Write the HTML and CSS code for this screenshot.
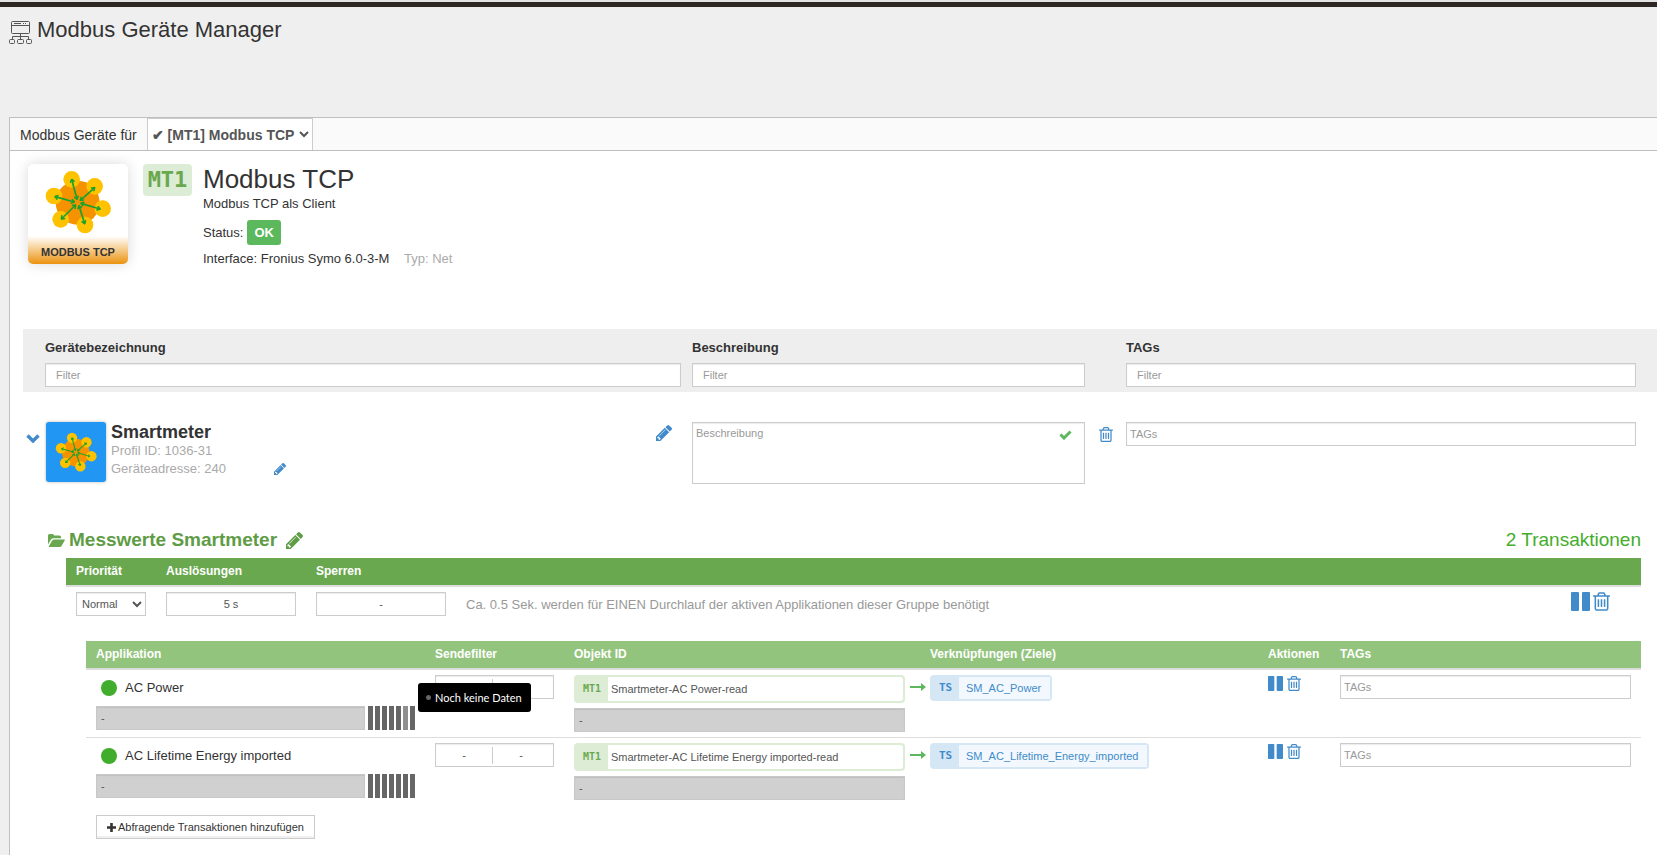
FILE: index.html
```html
<!DOCTYPE html>
<html lang="de">
<head>
<meta charset="utf-8">
<title>Modbus Geräte Manager</title>
<link rel="stylesheet" href="styles.css">
</head>
<body>
<svg class="sprite" aria-hidden="true">
  <defs>
    <marker id="tip" viewBox="0 0 12 14" refX="10" refY="7" markerWidth="14" markerHeight="16" markerUnits="userSpaceOnUse" orient="auto-start-reverse">
      <path d="M2 1 L10 7 L2 13" fill="none" stroke="#17a22f" stroke-width="4"/>
    </marker>
  </defs>
  <symbol id="flower" viewBox="132 90 204 192">
    <circle cx="233" cy="188" r="66" fill="#f59200"/>
    <g fill="#fec200">
      <circle cx="215" cy="118" r="25"/><circle cx="284" cy="139" r="25"/><circle cx="162" cy="168" r="25"/>
      <circle cx="308" cy="206" r="25"/><circle cx="182" cy="238" r="25"/><circle cx="255" cy="255" r="25"/>
    </g>
    <g stroke="#17a22f" stroke-width="5">
      <line x1="231" y1="178" x2="215" y2="118" marker-start="url(#tip)" marker-end="url(#tip)"/>
      <line x1="241" y1="181" x2="284" y2="143" marker-start="url(#tip)" marker-end="url(#tip)"/>
      <line x1="223" y1="186" x2="165" y2="170" marker-start="url(#tip)" marker-end="url(#tip)"/>
      <line x1="243" y1="190" x2="300" y2="207" marker-start="url(#tip)" marker-end="url(#tip)"/>
      <line x1="227" y1="195" x2="184" y2="237" marker-start="url(#tip)" marker-end="url(#tip)"/>
      <line x1="237" y1="197" x2="254" y2="251" marker-start="url(#tip)" marker-end="url(#tip)"/>
    </g>
  </symbol>
  <symbol id="trash" viewBox="192 128 1408 1536"><path fill="currentColor" d="M704 736v576q0 14-9 23t-23 9h-64q-14 0-23-9t-9-23V736q0-14 9-23t23-9h64q14 0 23 9t9 23zm256 0v576q0 14-9 23t-23 9h-64q-14 0-23-9t-9-23V736q0-14 9-23t23-9h64q14 0 23 9t9 23zm256 0v576q0 14-9 23t-23 9h-64q-14 0-23-9t-9-23V736q0-14 9-23t23-9h64q14 0 23 9t9 23zm128 724V512H448v948q0 22 7 40.5t14.5 27 10.5 8.5h832q3 0 10.5-8.5t14.5-27 7-40.5zM672 384h448l-48-117q-7-9-17-11H738q-10 2-17 11zm928 32v64q0 14-9 23t-23 9h-96v948q0 83-47 143.5t-113 60.5H480q-66 0-113-58.5T320 1464V512h-96q-14 0-23-9t-9-23v-64q0-14 9-23t23-9h309l70-167q15-37 54-63t79-26h320q40 0 79 26t54 63l70 167h309q14 0 23 9t9 23z"/></symbol>
  <symbol id="pencil" viewBox="128 149 1515 1515"><path fill="currentColor" d="M491 1536l91-91-235-235-91 91v107h128v128h107zm523-928q0-22-22-22-10 0-17 7l-542 542q-7 7-7 17 0 22 22 22 10 0 17-7l542-542q7-7 7-17zm-54-192l416 416-832 832H128v-416zm683 96q0 53-37 90l-166 166-416-416 166-165q36-38 90-38 53 0 91 38l235 234q37 39 37 91z"/></symbol>
  <symbol id="pause" viewBox="0 0 19 19"><path fill="currentColor" d="M1 0h6a1 1 0 0 1 1 1v17a1 1 0 0 1-1 1h-6a1 1 0 0 1-1-1v-17a1 1 0 0 1 1-1zM12 0h6a1 1 0 0 1 1 1v17a1 1 0 0 1-1 1h-6a1 1 0 0 1-1-1v-17a1 1 0 0 1 1-1z"/></symbol>
  <symbol id="arrow" viewBox="0 0 16 8"><path fill="currentColor" d="M0 3h11v-3l5 4-5 4v-3h-11z"/></symbol>
</svg>

<div class="topbar"></div>
<header class="page-head">
  <svg class="net-icon" viewBox="0 0 23 23" fill="none" stroke="#555" aria-hidden="true">
    <rect x="2.5" y=".5" width="18" height="12" rx="1"/><path d="M3 4.500h17M5 2.500h7M14 2.500h1M16 2.500h1M11.500 13v5M3.500 18v-2.500h16v2.500"/>
    <rect x=".5" y="18.500" width="5" height="4" rx="1"/><rect x="8.500" y="18.500" width="6" height="4" rx="1"/><rect x="17.500" y="18.500" width="5" height="4" rx="1"/>
  </svg>
  <h1>Modbus Geräte Manager</h1>
</header>

<main class="panel">
  <div class="panel-head">
    <label for="module">Modbus Geräte für</label>
    <select id="module" class="module-select"><option>✔ [MT1] Modbus TCP</option></select>
  </div>

  <section class="module">
    <div class="card">
      <svg class="card-logo" aria-hidden="true"><use href="#flower"/></svg>
      <span class="card-name">MODBUS TCP</span>
    </div>
    <span class="module-id">MT1</span>
    <div>
      <h2>Modbus TCP</h2>
      <p class="subtitle">Modbus TCP als Client</p>
      <p class="status">Status: <span class="ok">OK</span></p>
      <p class="interface">Interface: Fronius Symo 6.0-3-M <span class="muted">Typ: Net</span></p>
    </div>
  </section>

  <section class="columns filters">
    <div class="c-name"><label for="f1">Gerätebezeichnung</label><input id="f1" class="field" placeholder="Filter"></div>
    <div class="c-desc"><label for="f2">Beschreibung</label><input id="f2" class="field" placeholder="Filter"></div>
    <div class="c-tags"><label for="f3">TAGs</label><input id="f3" class="field" placeholder="Filter"></div>
  </section>

  <section class="columns device">
    <button class="icon-btn toggle" aria-label="Einklappen"><svg width="14" height="9" viewBox="0 0 14 9"><path d="M1.500 1.500 7 7l5.500-5.500" fill="none" stroke="currentColor" stroke-width="3.400"/></svg></button>
    <div class="c-name device-main">
      <div class="tile"><svg class="tile-logo" aria-hidden="true"><use href="#flower"/></svg></div>
      <div class="device-text">
        <h3>Smartmeter</h3>
        <p>Profil ID: 1036-31</p>
        <p class="address">Geräteadresse: 240 <button class="icon-btn" aria-label="Adresse bearbeiten"><svg width="12" height="12"><use href="#pencil"/></svg></button></p>
      </div>
      <button class="icon-btn edit-device" aria-label="Gerät bearbeiten"><svg width="16" height="16"><use href="#pencil"/></svg></button>
    </div>
    <div class="c-desc desc-box">
      <textarea class="field tight" aria-label="Beschreibung" placeholder="Beschreibung"></textarea>
      <svg class="saved" viewBox="0 0 13 10" aria-hidden="true"><path d="M1.500 4.500 5 8l6.500-6.500" fill="none" stroke="#5cb85c" stroke-width="3"/></svg>
    </div>
    <div class="c-del"><button class="icon-btn" aria-label="Gerät löschen"><svg width="14" height="15"><use href="#trash"/></svg></button></div>
    <div class="c-tags"><input class="field tight" aria-label="TAGs" placeholder="TAGs"></div>
  </section>

  <section class="group">
    <div class="group-head">
      <svg width="17" height="13" viewBox="0 0 17 13" aria-hidden="true"><path fill="currentColor" d="M0 10.500V1.500Q0 0 1.500 0h3Q6 0 6 1.500h5.500Q13 1.500 13 3v1.200H5.500Q4 4.200 3 5.500zM1 12 4.200 6.400Q4.800 5.400 6 5.400h10.300q1 0 .4 1L13.800 11.500Q13.200 13 11.800 13H1.500Q.5 13 1 12z"/></svg>
      <h3>Messwerte Smartmeter</h3>
      <button class="icon-btn green" aria-label="Gruppe bearbeiten"><svg width="17" height="17"><use href="#pencil"/></svg></button>
      <span class="count">2 Transaktionen</span>
    </div>

    <div class="group-body">
      <table class="grid settings">
        <colgroup><col class="w-prio"><col class="w-trig"><col class="w-trig"><col><col class="w-ops"></colgroup>
        <thead><tr><th>Priorität</th><th>Auslösungen</th><th>Sperren</th><th></th><th></th></tr></thead>
        <tbody><tr>
          <td><select class="field prio" aria-label="Priorität"><option>Normal</option></select></td>
          <td><button class="field value">5 s</button></td>
          <td><button class="field value">-</button></td>
          <td class="note">Ca. 0.5 Sek. werden für EINEN Durchlauf der aktiven Applikationen dieser Gruppe benötigt</td>
          <td><div class="ops large"><button class="icon-btn" aria-label="Pausieren"><svg width="19" height="19"><use href="#pause"/></svg></button><button class="icon-btn" aria-label="Löschen"><svg width="17" height="19"><use href="#trash"/></svg></button></div></td>
        </tr></tbody>
      </table>

      <div class="apps-wrap">
        <table class="grid apps">
          <colgroup><col class="w-app"><col class="w-filter"><col class="w-object"><col class="w-link"><col class="w-act"><col></colgroup>
          <thead><tr><th>Applikation</th><th>Sendefilter</th><th>Objekt ID</th><th class="th-link">Verknüpfungen (Ziele)</th><th>Aktionen</th><th>TAGs</th></tr></thead>
          <tbody>
            <tr>
              <td>
                <div class="app-name"><i class="dot"></i>AC Power</div>
                <div class="app-value"><div class="readout">-</div><div class="bars"><i></i><i></i><i></i><i></i><i></i><i class="hover"></i><i></i></div><div class="tooltip" role="tooltip"><i></i>Noch keine Daten</div></div>
              </td>
              <td><button class="field split" aria-label="Sendefilter"><span></span><span></span></button></td>
              <td class="td-object"><div class="object"><b>MT1</b><span>Smartmeter-AC Power-read</span></div><div class="readout">-</div></td>
              <td class="td-link"><div class="link-row"><svg class="arrow" aria-hidden="true"><use href="#arrow"/></svg><a class="target" href="#"><b>TS</b><span>SM_AC_Power</span></a></div></td>
              <td><div class="ops"><button class="icon-btn" aria-label="Pausieren"><svg width="15" height="15"><use href="#pause"/></svg></button><button class="icon-btn" aria-label="Löschen"><svg width="14" height="15"><use href="#trash"/></svg></button></div></td>
              <td><input class="field tight" aria-label="TAGs" placeholder="TAGs"></td>
            </tr>
            <tr>
              <td>
                <div class="app-name"><i class="dot"></i>AC Lifetime Energy imported</div>
                <div class="app-value"><div class="readout">-</div><div class="bars"><i></i><i></i><i></i><i></i><i></i><i></i><i></i></div></div>
              </td>
              <td><button class="field split" aria-label="Sendefilter"><span>-</span><span>-</span></button></td>
              <td class="td-object"><div class="object"><b>MT1</b><span>Smartmeter-AC Lifetime Energy imported-read</span></div><div class="readout">-</div></td>
              <td class="td-link"><div class="link-row"><svg class="arrow" aria-hidden="true"><use href="#arrow"/></svg><a class="target" href="#"><b>TS</b><span>SM_AC_Lifetime_Energy_imported</span></a></div></td>
              <td><div class="ops"><button class="icon-btn" aria-label="Pausieren"><svg width="15" height="15"><use href="#pause"/></svg></button><button class="icon-btn" aria-label="Löschen"><svg width="14" height="15"><use href="#trash"/></svg></button></div></td>
              <td><input class="field tight" aria-label="TAGs" placeholder="TAGs"></td>
            </tr>
          </tbody>
        </table>
        <button class="field add"><svg width="9" height="9" viewBox="0 0 9 9" aria-hidden="true"><path d="M4.500 0v9M0 4.500h9" stroke="#333" stroke-width="2.600"/></svg>Abfragende Transaktionen hinzufügen</button>
      </div>
    </div>
  </section>
</main>
</body>
</html>
```

FILE: styles.css
```css
* { box-sizing: border-box; }
body {
  margin: 0;
  min-height: 100vh;
  display: flex;
  flex-direction: column;
  background: #efefef;
  color: #333;
  font: 13px/18px "Liberation Sans", Arial, sans-serif;
}
h1, h2, h3, p { margin: 0; font-weight: normal; }
button, input, select, textarea { font-family: inherit; margin: 0; }
svg { display: block; flex: none; }
.sprite { position: absolute; width: 0; height: 0; }

.topbar { height: 7px; background: #2e2723; border-top: 2px solid #e4e4e4; }
.page-head { display: flex; align-items: center; gap: 5px; padding: 7px 9px 0; margin-bottom: 71px; }
.page-head h1 { font-size: 22px; line-height: 32px; }
.net-icon { width: 23px; height: 23px; margin-top: 4px; }

.panel { flex: 1; margin-left: 9px; padding-bottom: 16px; background: #fff; border-left: 1px solid #bfbfbf; border-top: 1px solid #bfbfbf; }
.panel-head { display: flex; align-items: center; gap: 10px; padding-left: 10px; height: 33px; background: #fafafa; border-bottom: 1px solid #bfbfbf; font-size: 14px; line-height: 20px; }
.panel-head label { padding-top: 2px; }
.module-select { width: 166px; height: 32px; padding: 1px 0 0; border: 1px solid #ccc; border-bottom: 0; border-radius: 0; background: #fff; color: #555; font-size: 14px; font-weight: bold; }

.module { display: flex; align-items: flex-start; padding: 13px 18px 0; }
.card { display: flex; flex-direction: column; align-items: center; justify-content: space-between; width: 100px; height: 100px; margin-right: 15px; padding-top: 6px; border-radius: 5px; overflow: hidden; background: #fff; box-shadow: 0 0 14px rgba(0, 0, 0, .15); }
.card-logo { width: 68px; height: 64px; }
.card-name { width: 100%; height: 28px; background: linear-gradient(#fff, #eb930f); color: #333; font: bold 11px/32px "Liberation Sans", Arial, sans-serif; text-align: center; }
.module-id { height: 32px; width: 49px; margin-right: 11px; border-radius: 4px; background: #dcecd5; color: #6aa84f; font: bold 22px/32px "DejaVu Sans Mono", monospace; text-align: center; }
.module h2 { font-size: 26px; line-height: 30px; }
.subtitle { line-height: 20px; }
.status { display: flex; align-items: center; gap: 4px; margin-top: 6px; }
.ok { padding: 0 7px; border-radius: 3px; background: #5cb85c; color: #fff; font-weight: bold; line-height: 25px; }
.interface { margin-top: 4px; line-height: 20px; }
.muted { margin-left: 11px; color: #aaa; }

.columns { display: grid; grid-template-columns: 22px 636fr 11px 393fr 41px 510fr; margin-left: 13px; padding-right: 21px; }
.c-name { grid-column: 2; }
.c-desc { grid-column: 4; }
.c-del { grid-column: 5; }
.c-tags { grid-column: 6; }
.filters { margin-top: 60px; padding-top: 9px; padding-bottom: 5px; background: #eee; }
.filters label { display: block; margin-bottom: 5px; font-weight: bold; line-height: 20px; }

.field { display: block; width: 100%; height: 24px; padding: 0 10px; border: 1px solid #ccc; border-radius: 0; background: #fff; box-shadow: inset 0 1px 1px rgba(0, 0, 0, .08); color: #555; font-size: 11px; outline: 0; }
.field::placeholder { color: #999; opacity: 1; }
.tight { padding: 0 3px; }
.icon-btn { display: block; padding: 0; border: 0; background: none; color: #428bca; }
.green { color: #5f9c46; }

.device { margin-top: 30px; }
.toggle { justify-self: start; align-self: start; padding: 12px 0 0 3px; }
.device-main { display: flex; align-items: flex-start; }
.tile { width: 60px; height: 60px; margin: 0 5px 0 1px; padding: 10px 8px; border-radius: 3px; background: #2196f3; box-shadow: 0 0 3px rgba(0, 0, 0, .3); }
.tile-logo { width: 44px; height: 40px; }
.device-text { color: #aaa; }
.device-text h3 { color: #333; font-size: 18px; line-height: 20px; font-weight: bold; }
.address { display: flex; align-items: center; gap: 48px; }
.edit-device { margin-left: auto; padding: 3px 9px 0 0; }
.desc-box { position: relative; }
.desc-box textarea { height: 62px; padding-top: 4px; resize: none; }
.saved { position: absolute; top: 8px; right: 13px; width: 13px; height: 10px; }
.c-del { padding: 5px 0 0 14px; }

.group { margin: 44px 16px 0 38px; }
.group-head { display: flex; align-items: center; gap: 4px; height: 24px; margin-bottom: 6px; color: #6aa84f; font-size: 19px; line-height: 24px; }
.group-head h3 { margin-right: 5px; color: #5f9c46; font-size: 19px; font-weight: bold; }
.count { margin-left: auto; color: #45ad2c; }
.group-body { margin-left: 18px; }

.grid { width: 100%; table-layout: fixed; border-collapse: separate; border-spacing: 0; }
.grid th { height: 29px; padding: 0 10px 2px; border-bottom: 2px solid #ddd; background: #6aa84f; color: #fff; font-size: 12px; line-height: 14px; text-align: left; }
.grid td { padding: 5px 10px; vertical-align: top; }
.apps th { background: #93c47d; }
.apps tbody tr + tr td { border-top: 1px solid #ddd; }
.w-prio { width: 90px; }
.w-trig { width: 150px; }
.w-ops { width: 80px; }
.w-app { width: 339px; }
.w-filter { width: 139px; }
.w-object { width: 341px; }
.w-link { width: 353px; }
.w-act { width: 72px; }

.prio { padding: 0 1px; }
.value { text-align: center; }
.grid .note { padding-top: 6px; padding-bottom: 4px; color: #999; line-height: 24px; }
.ops { display: flex; gap: 4px; padding-top: 1px; }
.ops.large { gap: 3px; padding-top: 0; }

.apps-wrap { margin: 20px 0 0 20px; }
.app-name { display: flex; align-items: center; gap: 8px; height: 26px; margin-bottom: 5px; padding-left: 5px; }
.dot { width: 16px; height: 16px; border-radius: 50%; background: #41ad2c; }
.app-value { position: relative; display: flex; gap: 3px; }
.readout { flex: 1; height: 24px; padding-left: 4px; border: 1px solid #c8c8c8; background: #d0d0d0; box-shadow: inset 0 1px 1px rgba(0, 0, 0, .08); color: #555; font-size: 11px; line-height: 22px; }
.bars { display: flex; gap: 2px; }
.bars i { width: 5px; height: 24px; background: #666; }
.bars .hover { background: #8f8f8f; }
.tooltip { position: absolute; z-index: 1; left: calc(100% + 3px); bottom: 18px; display: flex; align-items: center; gap: 4px; height: 29px; padding: 0 9px 0 8px; border-radius: 3px; background: #000; color: #fff; font: 11px/29px Lato, "Open Sans", sans-serif; white-space: nowrap; }
.tooltip i { width: 5px; height: 5px; border-radius: 50%; background: #666; }
.grid .split { display: flex; align-items: center; width: 119px; padding: 0 4px 0 0; }
.split span { flex: 1; height: 17px; line-height: 17px; }
.split span + span { border-left: 1px solid #ccc; }

.grid .td-object { padding-right: 0; }
.object { display: flex; height: 28px; margin-bottom: 5px; padding: 2px; border-radius: 4px; background: #dcecd5; color: #555; font-size: 11px; line-height: 24px; }
.object b { width: 32px; text-align: center; color: #6aa84f; font: bold 10px/24px "DejaVu Sans Mono", monospace; }
.object span { flex: 1; padding-left: 3px; border-radius: 0 3px 3px 0; background: #fff; }
.grid .th-link { padding-left: 25px; }
.grid .td-link { padding-left: 5px; padding-right: 0; }
.link-row { display: flex; gap: 4px; }
.arrow { width: 16px; height: 8px; margin-top: 8px; color: #5cb85c; }
.target { display: flex; padding: 2px; border-radius: 4px; background: #d5e6f5; color: #428bca; font-size: 11px; line-height: 22px; text-decoration: none; }
.target b { width: 27px; text-align: center; font: bold 11px/22px "DejaVu Sans Mono", monospace; }
.target span { padding: 0 9px 0 7px; background: #f2f8fd; }

.add { display: flex; align-items: center; gap: 2px; width: auto; margin: 10px 0 0 10px; color: #333; box-shadow: inset 0 -2px 0 #f0f0f0; }
```
